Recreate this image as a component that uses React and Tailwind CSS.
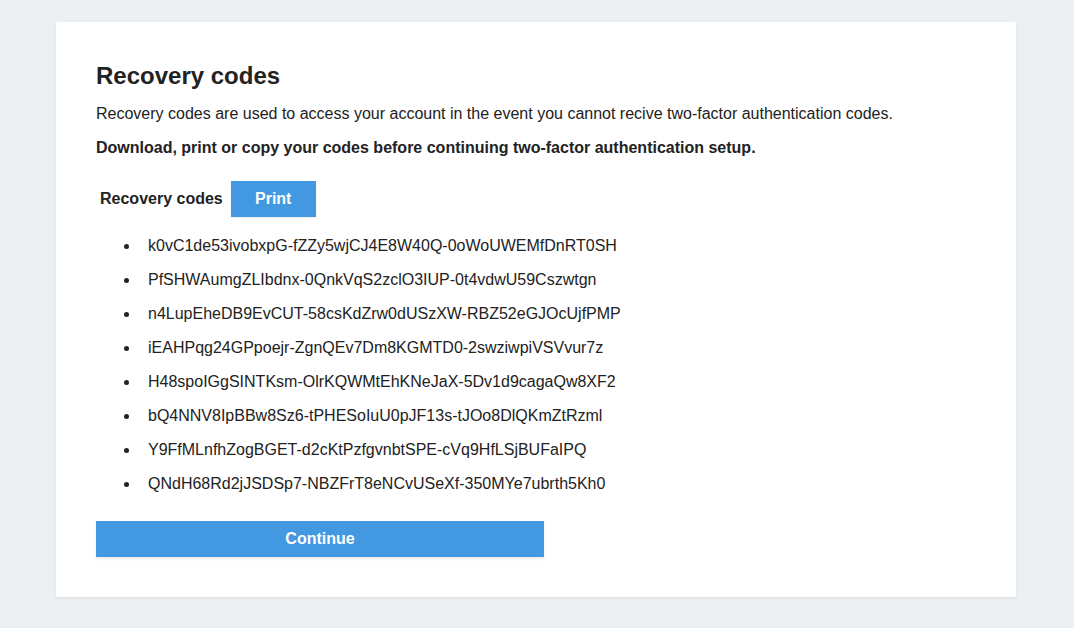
const CODES = [
  "k0vC1de53ivobxpG-fZZy5wjCJ4E8W40Q-0oWoUWEMfDnRT0SH",
  "PfSHWAumgZLIbdnx-0QnkVqS2zclO3IUP-0t4vdwU59Cszwtgn",
  "n4LupEheDB9EvCUT-58csKdZrw0dUSzXW-RBZ52eGJOcUjfPMP",
  "iEAHPqg24GPpoejr-ZgnQEv7Dm8KGMTD0-2swziwpiVSVvur7z",
  "H48spoIGgSINTKsm-OlrKQWMtEhKNeJaX-5Dv1d9cagaQw8XF2",
  "bQ4NNV8IpBBw8Sz6-tPHESoIuU0pJF13s-tJOo8DlQKmZtRzml",
  "Y9FfMLnfhZogBGET-d2cKtPzfgvnbtSPE-cVq9HfLSjBUFaIPQ",
  "QNdH68Rd2jJSDSp7-NBZFrT8eNCvUSeXf-350MYe7ubrth5Kh0",
];

export default function App() {
  return (
    <div className="min-h-[628px] bg-[#ecf0f3] pt-[22px] pb-8 font-['Liberation_Sans',Arial,sans-serif] text-[#222]">
      <div className="ml-[56px] w-[960px] bg-white px-10 pt-10 pb-10 shadow-[0_1px_3px_rgba(0,0,0,0.08)]">
        <h2 className="text-[24px] leading-[28px] font-bold">Recovery codes</h2>
        <p className="mt-3 text-base leading-6">
          Recovery codes are used to access your account in the event you cannot recive two-factor authentication codes.
        </p>
        <p className="mt-[10px] text-base leading-6 font-bold">
          Download, print or copy your codes before continuing two-factor authentication setup.
        </p>

        <div className="mt-[21px] flex items-center pl-1">
          <span className="text-base font-bold">Recovery codes</span>
          <button className="ml-2 h-9 w-[85px] bg-[#4299e1] text-base font-bold text-white shadow-[0_1px_2px_rgba(0,0,0,0.08)]">
            Print
          </button>
        </div>

        <ul className="mt-3">
          {CODES.map((c) => (
            <li key={c} className="flex items-center py-[5px] text-base leading-6">
              <span className="ml-7 mr-[19px] h-[5px] w-[5px] rounded-full bg-[#222]" />
              <span>{c}</span>
            </li>
          ))}
        </ul>

        <button className="mt-5 h-9 w-[448px] bg-[#4299e1] text-base font-bold text-white shadow-[0_2px_3px_rgba(0,0,0,0.08)]">
          Continue
        </button>
      </div>
    </div>
  );
}
